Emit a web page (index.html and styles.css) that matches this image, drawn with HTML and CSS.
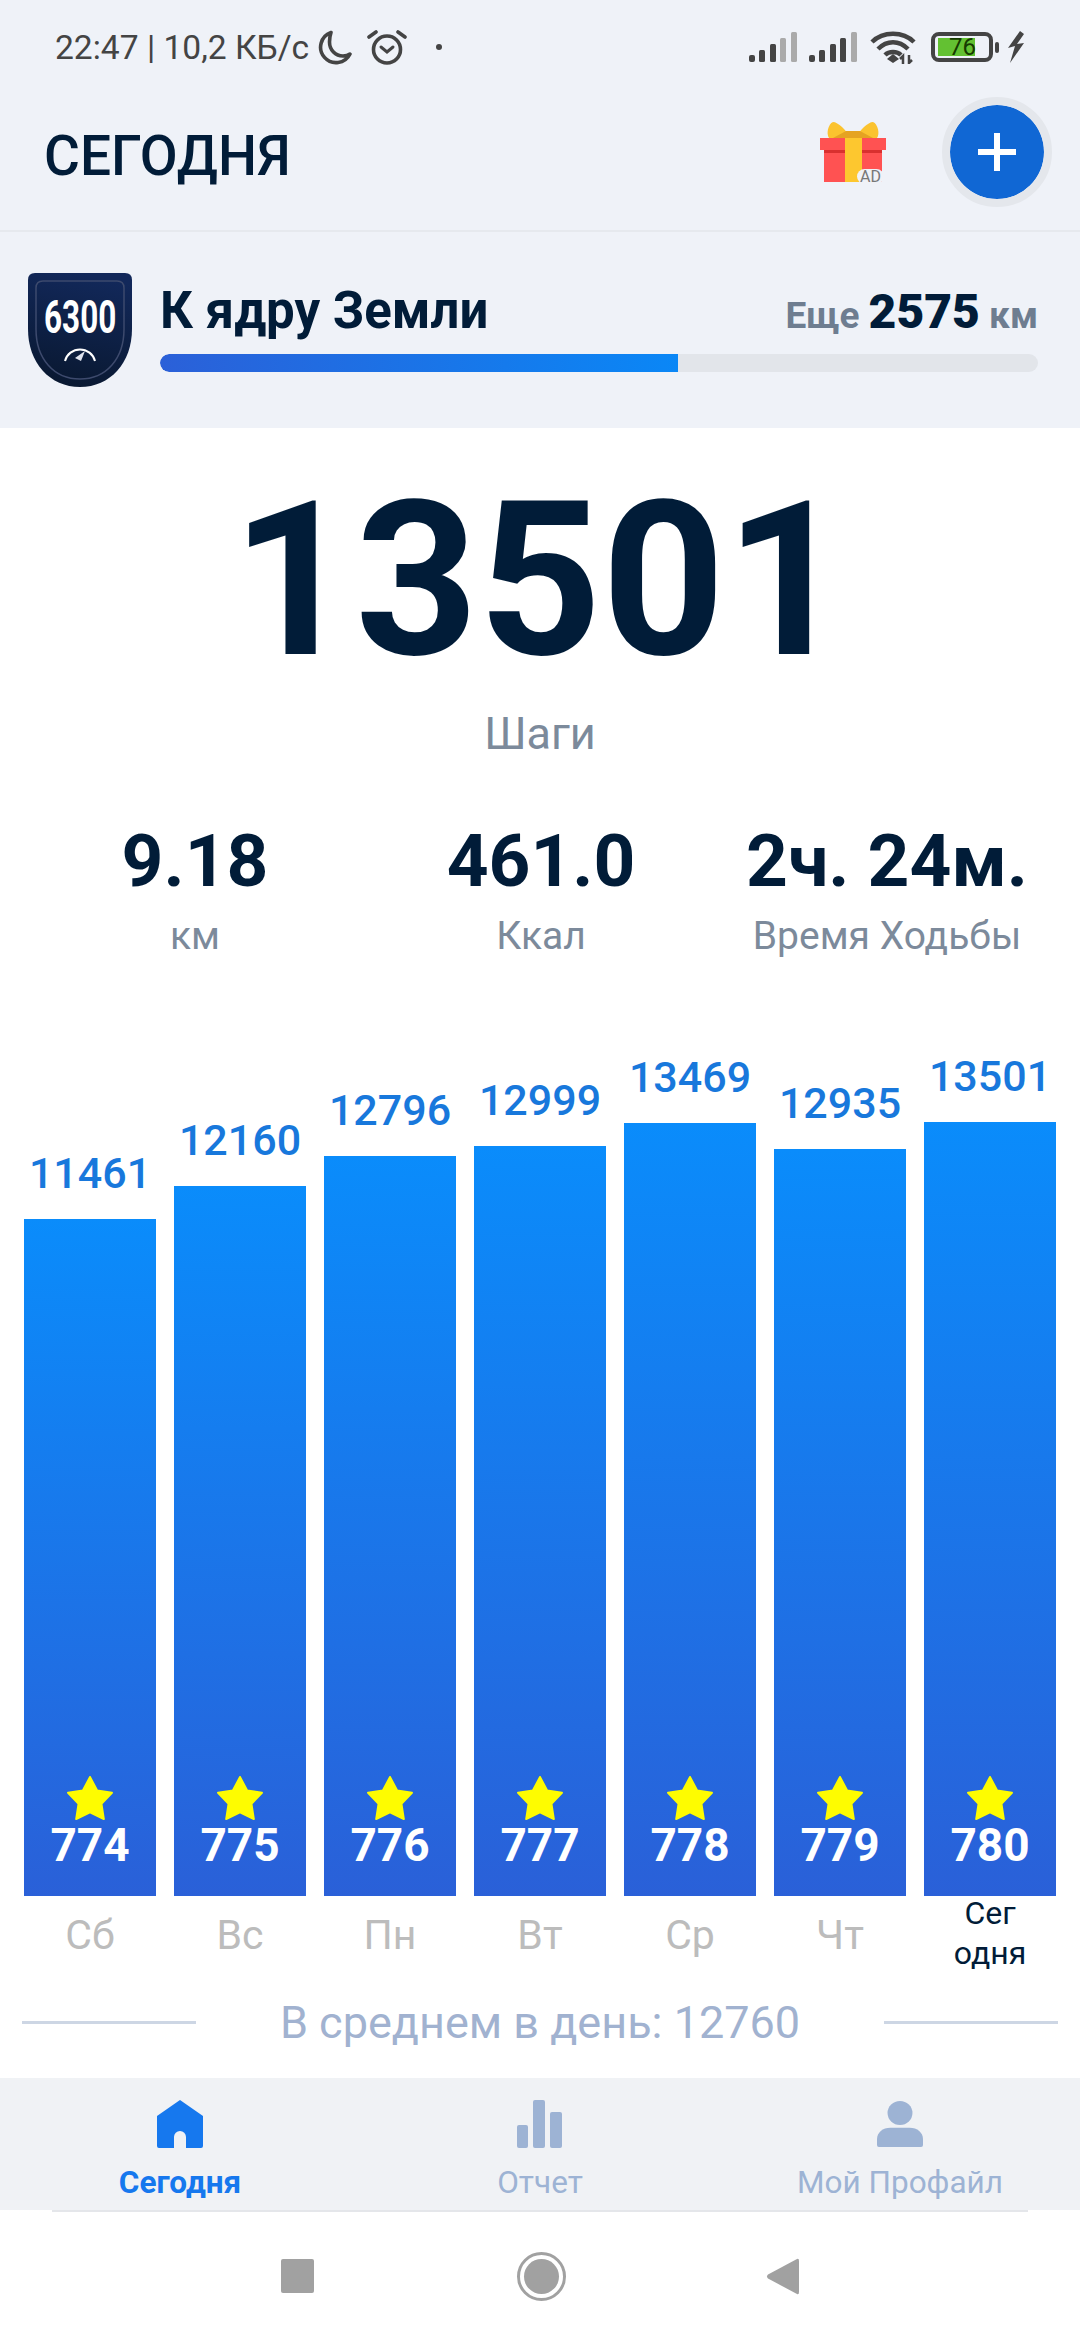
FILE: index.html
```html
<!DOCTYPE html>
<html lang="ru">
<head>
<meta charset="utf-8">
<title>Сегодня</title>
<link rel="stylesheet" href="styles.css">
</head>
<body>
<div class="page">
  <header class="head">
    <div class="status">
      <div class="status-left">
        <span class="status-text">22:47 | 10,2 КБ/с</span>
        <svg class="ic-moon" viewBox="0 0 34 35"><path d="M13 2.500A15.500 15.500 0 1 0 32 24C30 25.500 27.500 26 25 26C17.500 26 11.500 20 11.500 12C11.500 8.500 12 5.500 13 2.500Z" fill="none" stroke="#444" stroke-width="3.600" stroke-linejoin="round"/></svg>
        <svg class="ic-alarm" viewBox="0 0 40 36"><circle cx="20" cy="20.500" r="13.500" fill="none" stroke="#444" stroke-width="3.600"/><path d="M14 18l6 5 6-5" fill="none" stroke="#444" stroke-width="3" stroke-linecap="round"/><path d="M2 8L9 3M38 8L31 3" stroke="#444" stroke-width="3.600" stroke-linecap="round"/></svg>
        <span class="dot"></span>
      </div>
      <div class="status-right">
        <svg class="ic-signal" viewBox="0 0 48 32"><rect x="0" y="24" width="6" height="7" rx="2" fill="#444"/><rect x="10" y="19" width="6" height="12" rx="1.500" fill="#444"/><rect x="21" y="13" width="6" height="18" rx="1.500" fill="#444"/><rect x="31" y="7" width="6" height="24" rx="1.500" fill="#aaa"/><rect x="42" y="1" width="6" height="30" rx="1.500" fill="#aaa"/></svg>
        <svg class="ic-signal" viewBox="0 0 48 32"><rect x="0" y="24" width="6" height="7" rx="2" fill="#444"/><rect x="10" y="19" width="6" height="12" rx="1.500" fill="#444"/><rect x="21" y="13" width="6" height="18" rx="1.500" fill="#444"/><rect x="31" y="7" width="6" height="24" fill="#444" rx="1.500"/><rect x="42" y="1" width="6" height="30" rx="1.500" fill="#aaa"/></svg>
        <svg class="ic-wifi" viewBox="0 0 46 34"><path d="M2 12C13 1 33 1 44 12M8 19C17 10 29 10 38 19M15 25C19 21 27 21 31 25" fill="none" stroke="#444" stroke-width="4.500"/><path d="M17 29l6-5 6 5-6 4z" fill="#444"/><path d="M33 34v-8l-3 3M39 25v8l3-3" fill="none" stroke="#444" stroke-width="2.500"/></svg>
        <div class="battery"><div class="batt-body"><div class="batt-fill"></div><span class="batt-num">76</span></div><span class="batt-cap"></span></div>
        <svg class="ic-bolt" viewBox="0 0 18 32"><path d="M13 0L1 17 8 15 3 32 17 12 10 13 17 3z" fill="#444"/></svg>
      </div>
    </div>
    <div class="appbar">
      <h1 class="title">СЕГОДНЯ</h1>
      <div class="appbar-actions">
        <svg class="ic-gift" viewBox="0 0 68 66"><path d="M31 16C26 8 18 0 13 0 8 2 6 12 9 16z" fill="#fbc32f"/><path d="M35 16C40 8 48 0 53 0 58 2 60 12 57 16z" fill="#fbc32f"/><path d="M13 16L26 9H40L53 16z" fill="#e5a322"/><rect x="0" y="16" width="66" height="12" fill="#ff5252"/><rect x="4" y="28" width="58" height="32" fill="#ff5252"/><rect x="4" y="28" width="58" height="3" fill="#d9302f"/><rect x="25" y="16" width="17" height="44" fill="#fdc72f"/><rect x="37" y="47" width="27" height="15" rx="7.500" fill="#f0f2f7"/><text class="ad" x="40" y="60">AD</text></svg>
        <button class="add" aria-label="Добавить"><span class="add-v"></span><span class="add-h"></span></button>
      </div>
    </div>
  </header>

  <section class="goal">
    <svg class="badge" viewBox="0 0 104 114">
      <defs><linearGradient id="bg" x1="0.500" y1="0" x2="0.300" y2="1"><stop offset="0" stop-color="#12285a"/><stop offset="1" stop-color="#091830"/></linearGradient></defs>
      <path d="M7 0H97Q104 0 104 7V56C104 90 82 114 52 114S0 90 0 56V7Q0 0 7 0Z" fill="url(#bg)"/>
      <path d="M15 8H89Q96 8 96 15V56C96 86 78 106 52 106S8 86 8 56V15Q8 8 15 8Z" fill="none" stroke="#3d4a6d" stroke-width="1.500"/>
      <text class="badge-num" transform="translate(16 60) scale(1.05 1.57)">6300</text>
      <path d="M37 88A15.500 15.500 0 0 1 67 88" fill="none" stroke="#fff" stroke-width="2"/>
      <path d="M47 85L57 78 53 88z" fill="#dfe3ee"/>
    </svg>
    <div class="goal-body">
      <div class="goal-row">
        <span class="goal-name">К ядру Земли</span>
        <span class="goal-left">Еще <b>2575</b> км</span>
      </div>
      <div class="track"><div class="fill"></div></div>
    </div>
  </section>

  <main class="main">
    <div class="steps">13501</div>
    <div class="steps-label">Шаги</div>
    <div class="stats">
      <div class="stat"><div class="stat-val">9.18</div><div class="stat-label">км</div></div>
      <div class="stat"><div class="stat-val">461.0</div><div class="stat-label">Ккал</div></div>
      <div class="stat"><div class="stat-val">2ч. 24м.</div><div class="stat-label">Время Ходьбы</div></div>
    </div>

    <div class="chart">
      <div class="col"><span class="col-val">11461</span><div class="bar" style="height:677px"><svg class="star" viewBox="0 0 48 46"><path d="M24 1l7.500 14 15.500 2.500-11 11.500 2.500 16-14.500-7-14.500 7 2.500-16-11-11.500 15.500-2.500z"/></svg><span class="bar-num">774</span></div></div>
      <div class="col"><span class="col-val">12160</span><div class="bar" style="height:710px"><svg class="star" viewBox="0 0 48 46"><path d="M24 1l7.500 14 15.500 2.500-11 11.500 2.500 16-14.500-7-14.500 7 2.500-16-11-11.500 15.500-2.500z"/></svg><span class="bar-num">775</span></div></div>
      <div class="col"><span class="col-val">12796</span><div class="bar" style="height:740px"><svg class="star" viewBox="0 0 48 46"><path d="M24 1l7.500 14 15.500 2.500-11 11.500 2.500 16-14.500-7-14.500 7 2.500-16-11-11.500 15.500-2.500z"/></svg><span class="bar-num">776</span></div></div>
      <div class="col"><span class="col-val">12999</span><div class="bar" style="height:750px"><svg class="star" viewBox="0 0 48 46"><path d="M24 1l7.500 14 15.500 2.500-11 11.500 2.500 16-14.500-7-14.500 7 2.500-16-11-11.500 15.500-2.500z"/></svg><span class="bar-num">777</span></div></div>
      <div class="col"><span class="col-val">13469</span><div class="bar" style="height:773px"><svg class="star" viewBox="0 0 48 46"><path d="M24 1l7.500 14 15.500 2.500-11 11.500 2.500 16-14.500-7-14.500 7 2.500-16-11-11.500 15.500-2.500z"/></svg><span class="bar-num">778</span></div></div>
      <div class="col"><span class="col-val">12935</span><div class="bar" style="height:747px"><svg class="star" viewBox="0 0 48 46"><path d="M24 1l7.500 14 15.500 2.500-11 11.500 2.500 16-14.500-7-14.500 7 2.500-16-11-11.500 15.500-2.500z"/></svg><span class="bar-num">779</span></div></div>
      <div class="col"><span class="col-val">13501</span><div class="bar" style="height:774px"><svg class="star" viewBox="0 0 48 46"><path d="M24 1l7.500 14 15.500 2.500-11 11.500 2.500 16-14.500-7-14.500 7 2.500-16-11-11.500 15.500-2.500z"/></svg><span class="bar-num">780</span></div></div>
    </div>
    <div class="days">
      <span class="day">Сб</span><span class="day">Вс</span><span class="day">Пн</span><span class="day">Вт</span><span class="day">Ср</span><span class="day">Чт</span><span class="day today">Сег<br>одня</span>
    </div>
    <div class="avg"><span class="avg-line"></span><span class="avg-text">В среднем в день: 12760</span><span class="avg-line"></span></div>
  </main>

  <nav class="tabs">
    <div class="tab active">
      <svg class="tab-ic" viewBox="0 0 46 48"><path d="M23 0L46 16V46Q46 48 44 48H29V37A6 6 0 0 0 17 37V48H2Q0 48 0 46V16Z" fill="#1678ee"/></svg>
      <span>Сегодня</span>
    </div>
    <div class="tab">
      <svg class="tab-ic" viewBox="0 0 46 48"><rect x="0" y="25" width="11" height="23" rx="2" fill="#9db3d4"/><rect x="16" y="0" width="12" height="48" rx="2" fill="#9db3d4"/><rect x="33" y="12" width="12" height="36" rx="2" fill="#9db3d4"/></svg>
      <span>Отчет</span>
    </div>
    <div class="tab">
      <svg class="tab-ic" viewBox="0 0 48 48"><ellipse cx="24" cy="12.500" rx="13" ry="12.500" fill="#9db3d4"/><path d="M14 28H34C42 28 48 33 48 40V46Q48 48 46 48H2Q0 48 0 46V40C0 33 6 28 14 28Z" fill="#9db3d4"/></svg>
      <span>Мой Профайл</span>
    </div>
  </nav>
  <div class="tabs-rule"></div>

  <footer class="sysnav">
    <span class="nav-square"></span>
    <span class="nav-circle"><span class="nav-dot"></span></span>
    <svg class="nav-back" viewBox="0 0 33 37"><path d="M31 1Q33 0 33 3V34Q33 37 31 36L2 20.500Q0 18.500 2 16.500Z" fill="#a1a1a1"/></svg>
  </footer>
</div>
</body>
</html>
```
FILE: styles.css
```css
* { box-sizing: border-box; }
html, body { margin: 0; padding: 0; background: #fff; }
body { font-family: Roboto, "Noto Sans", sans-serif; color: #011c38; }
.page { width: 1080px; height: 2340px; display: flex; flex-direction: column; overflow: hidden; }

.head { background: #eff2f8; height: 232px; border-bottom: 2px solid #e6e9ee; flex: none; }
.status { height: 94px; padding: 0 55px 0 55px; display: flex; justify-content: space-between; align-items: center; }
.status-left, .status-right { display: flex; align-items: center; }
.status-text { font-size: 33.600px; color: #444; }
.ic-moon { width: 34px; height: 35px; margin-left: 9px; }
.ic-alarm { width: 40px; height: 36px; margin-left: 15px; }
.dot { width: 6px; height: 6px; border-radius: 50%; background: #444; margin-left: 29px; }
.ic-signal { width: 48px; height: 32px; margin-right: 12px; }
.ic-wifi { width: 46px; height: 34px; margin-left: 1px; }
.battery { display: flex; align-items: center; margin-left: 15px; }
.batt-body { width: 62px; height: 30px; border: 4px solid #444; border-radius: 8px; position: relative; padding: 2px 3px; }
.batt-fill { width: 37px; height: 100%; background: #63c132; }
.batt-num { position: absolute; left: 14px; top: -3px; font-size: 24px; line-height: 28px; color: #163a00; }
.batt-cap { width: 4px; height: 11px; background: #444; border-radius: 2px; margin-left: 2px; }
.ic-bolt { width: 18px; height: 32px; margin-left: 8px; }

.appbar { height: 116px; padding: 0 28px 0 44px; display: flex; justify-content: space-between; align-items: center; }
.title { margin: 8px 0 0; font-size: 55px; font-weight: 500; color: #011c38; }
.appbar-actions { display: flex; align-items: center; gap: 54px; }
.ic-gift { width: 68px; height: 66px; margin-top: 5px; }
.ad { font: 400 16px Roboto, sans-serif; fill: #777; }
.add { width: 110px; height: 110px; border-radius: 50%; border: 8px solid #e4e7ec; background: #1067d4; position: relative; padding: 0; background-clip: padding-box; }
.add-v, .add-h { position: absolute; background: #fff; }
.add-v { width: 6px; height: 38px; left: 44px; top: 28px; }
.add-h { width: 38px; height: 6px; left: 28px; top: 44px; }

.goal { background: #eff2f8; height: 196px; padding: 41px 42px 0 28px; display: flex; gap: 28px; flex: none; }
.badge { width: 104px; height: 114px; flex: none; }
.badge-num { font: 700 30px Roboto, sans-serif; fill: #fff; }
.goal-body { flex: 1; }
.goal-row { display: flex; justify-content: space-between; align-items: baseline; height: 81px; padding-top: 10px; line-height: 56px; }
.goal-name { font-size: 51px; font-weight: 700; color: #011c38; }
.goal-left { font-size: 37px; font-weight: 700; color: #6e7d90; }
.goal-left b { font-size: 48px; color: #011c38; }
.track { height: 18px; background: #e2e5ea; border-radius: 9px; overflow: hidden; }
.fill { width: 518px; height: 100%; border-radius: 9px 0 0 9px; background: linear-gradient(90deg, #2b60d8, #0a87f6); }

.main { flex: 1; background: #fff; display: flex; flex-direction: column; }
.steps { text-align: center; font-size: 215px; font-weight: 700; line-height: 240px; margin-top: 33px; color: #011c38; }
.steps-label { text-align: center; font-size: 45px; line-height: 50px; color: #7c8a9b; margin-top: 8px; }
.stats { display: grid; grid-template-columns: repeat(3, 346px); padding-left: 22px; margin-top: 62px; }
.stat { text-align: center; }
.stat-val { font-size: 73px; font-weight: 700; line-height: 80px; color: #011c38; white-space: nowrap; }
.stat-label { font-size: 39px; line-height: 48px; color: #7c8a9b; margin-top: 11px; }

.chart { height: 936px; padding: 0 24px; display: flex; gap: 18px; align-items: flex-end; flex: none; }
.col { width: 132px; display: flex; flex-direction: column; align-items: center; }
.col-val { font-size: 43px; font-weight: 500; line-height: 48px; color: #1878dc; white-space: nowrap; margin-bottom: 22px; }
.bar { width: 132px; display: flex; flex-direction: column; align-items: center; justify-content: flex-end; padding-bottom: 27px; background: linear-gradient(180deg, #0a8cfb, #2a60d8); }
.star { width: 48px; height: 44px; fill: #fefc00; stroke: #fefc00; stroke-width: 2; stroke-linejoin: round; }
.bar-num { font-size: 46px; font-weight: 700; line-height: 48px; color: #fff; margin-top: 1px; }

.days { display: flex; gap: 18px; padding: 0 24px; height: 68px; flex: none; }
.day { width: 132px; text-align: center; font-size: 41px; color: #bcbcbc; line-height: 48px; padding-top: 15px; }
.today { font-size: 32px; color: #011c38; line-height: 40px; padding-top: 0; margin-top: -3px; }

.avg { display: flex; align-items: center; justify-content: space-between; padding: 0 22px; height: 70px; margin-top: 23px; flex: none; }
.avg-line { width: 174px; height: 3px; background: #cdd6e4; }
.avg-text { font-size: 45px; color: #a1b2d0; }

.tabs { height: 132px; background: #f0f2f5; display: grid; grid-template-columns: repeat(3, 360px); flex: none; }
.tab { display: flex; flex-direction: column; align-items: center; padding-top: 22px; font-size: 31.500px; line-height: 40px; color: #9db3d4; }
.tab-ic { width: 46px; height: 48px; margin-bottom: 15px; flex: none; }
.active { color: #1678ee; font-weight: 700; }
.tabs-rule { height: 2px; margin: 0 52px; background: #e4e6ea; flex: none; }

.sysnav { height: 128px; background: #fff; display: flex; align-items: center; justify-content: center; flex: none; }
.nav-square { width: 33px; height: 34px; background: #a1a1a1; border-radius: 2px; }
.nav-circle { width: 49px; height: 49px; border: 3px solid #a1a1a1; border-radius: 50%; margin: 0 200px 0 203px; display: flex; align-items: center; justify-content: center; }
.nav-dot { width: 35px; height: 35px; border-radius: 50%; background: #a1a1a1; }
.nav-back { width: 33px; height: 37px; }
```
